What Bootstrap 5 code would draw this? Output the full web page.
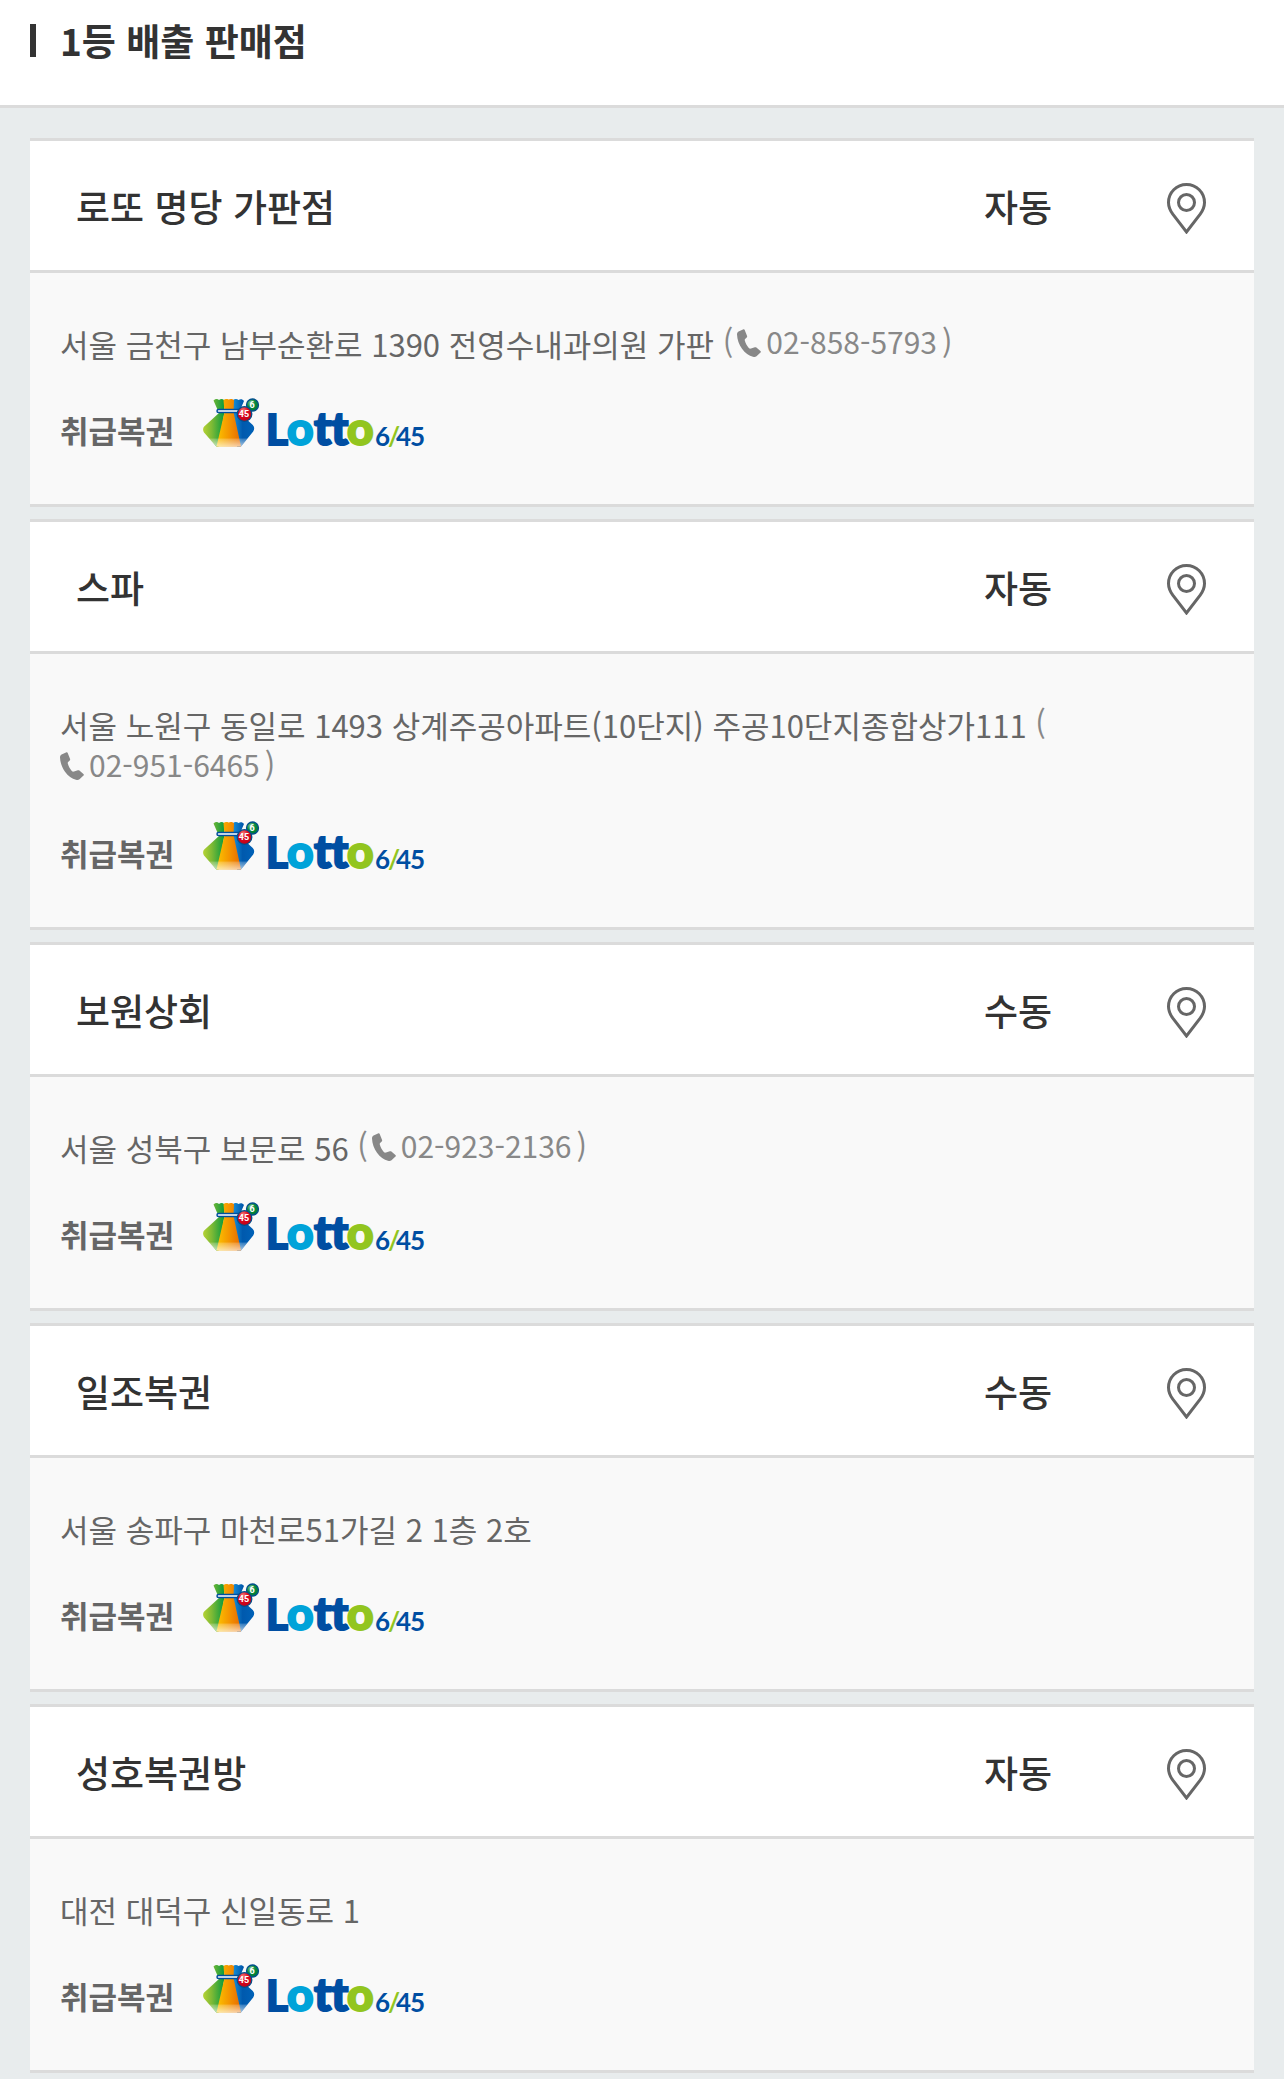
<!DOCTYPE html>
<html lang="ko">
<head>
<meta charset="utf-8">
<meta name="viewport" content="width=device-width, initial-scale=1">
<title>1등 배출 판매점</title>
<link rel="stylesheet" href="https://cdn.jsdelivr.net/npm/bootstrap@5.3.0/dist/css/bootstrap.min.css">
<style>
body{background:#e8eced;color:#333;font-family:"Noto Sans CJK KR",sans-serif;font-size:31px;line-height:42px}
.page-head{border-bottom:3px solid #dbdbdb;padding:16px 30px 41px;gap:24px}
.page-head::before{content:"";width:6px;height:33px;background:#333}
.page-head h1,.shop-head{font-size:37px;line-height:48px}
.shop-list{padding:30px 30px 6px;gap:12px}
.shop{border:solid #dbdbdb;border-width:3px 0;background:#f9f9f9}
.shop-head{border-bottom:3px solid #dbdbdb;padding:37px 48px 36px 46px}
.shop-head h2{font-size:inherit;line-height:inherit;font-weight:500}
.shop-kind{font-weight:500;margin-right:115px}
.pin{width:39px;height:56px}
.shop-body{padding:50px 30px 57px;color:#666}
.tel{color:#888;line-height:36px;vertical-align:3px}
.tel-open{margin-right:4px}
.tel a{color:inherit;white-space:nowrap;margin-right:5px;font-size:30px}
.tel-icon{width:24px;height:28px;vertical-align:-3px;margin-right:5px}
.goods{margin-top:33px;gap:29px;line-height:34px}
.goods-logo{width:222px;height:49px;overflow:visible}
.goods-logo text{font-family:Lato,sans-serif;font-weight:900;font-size:46px;fill:#004ea2;stroke:#004ea2;stroke-width:2px}
.goods-logo .logo-l{font-size:42px}
.goods-logo .logo-sky{fill:#00a3d9;stroke:#00a3d9}
.goods-logo .logo-lime{fill:#92c51f;stroke:#92c51f}
.goods-logo .logo-num{font-weight:700;font-size:26px;stroke:none}
.goods-logo .logo-ball{font-family:Roboto,sans-serif;font-weight:700;font-size:9px;fill:#fff;stroke:none;text-anchor:middle}
</style>
<script src="https://cdn.jsdelivr.net/npm/bootstrap@5.3.0/dist/js/bootstrap.bundle.min.js"></script>
</head>
<body>
<svg width="0" height="0" class="position-absolute" aria-hidden="true">
  <defs>
    <linearGradient id="gGreen" x1="0" y1="0" x2="1" y2="0"><stop offset="0" stop-color="#b5d234"/><stop offset=".4" stop-color="#7fba35"/><stop offset="1" stop-color="#079a3e"/></linearGradient>
    <linearGradient id="gOrange" x1="0" y1="0" x2="1" y2="0"><stop offset="0" stop-color="#fcc400"/><stop offset=".55" stop-color="#f39200"/><stop offset="1" stop-color="#e66a00"/></linearGradient>
    <linearGradient id="gBlue" x1="0" y1="0" x2="1" y2="0"><stop offset="0" stop-color="#1c9ae0"/><stop offset=".5" stop-color="#0059ad"/><stop offset="1" stop-color="#0062b8"/></linearGradient>
    <linearGradient id="gFade" x1="0" y1="0" x2="0" y2="1"><stop offset="0" stop-color="#fff" stop-opacity=".2"/><stop offset="1" stop-color="#fff" stop-opacity=".65"/></linearGradient>
    <radialGradient id="gRed" cx=".4" cy=".25" r=".75"><stop offset="0" stop-color="#f47c78"/><stop offset=".45" stop-color="#dc0a1e"/><stop offset="1" stop-color="#c00018"/></radialGradient>
    <radialGradient id="gBall" cx=".35" cy=".3" r=".75"><stop offset="0" stop-color="#7cc48c"/><stop offset=".5" stop-color="#078a3c"/><stop offset="1" stop-color="#007a35"/></radialGradient>
  </defs>
  <symbol id="pin" viewBox="0 -5 39 56">
    <path d="M19.500 1.500C9.500 1.500 1.500 9.500 1.500 19.500c0 4.500 1.800 8.200 4.300 11.700L19.500 49l13.700-17.800c2.500-3.500 4.300-7.200 4.300-11.700 0-10-8-18-18-18z" fill="none" stroke="#666" stroke-width="3"/>
    <circle cx="19.500" cy="19.500" r="8" fill="none" stroke="#666" stroke-width="3"/>
  </symbol>
  <symbol id="phone" viewBox="0 0 24 28">
    <path d="M6.500.2 1.600 2.400C.5 3 0 4 0 5.500c.2 5 2 10 5 14.200 3 4.200 7 7 11 8.100 1.500.4 2.600.2 3.500-.6l4-3.600c.6-.5.5-1.200-.1-1.700l-4-3.400c-.5-.4-1-.4-1.600-.2L14 19.600c-1 .3-1.600 0-2.200-.7-1.800-2-3.300-4.600-4-7.300-.2-.8 0-1.400.6-1.900l1.300-1.200c.5-.5.6-1 .3-1.700L7.600.8C7.400.2 7 0 6.500.2z" fill="#888"/>
  </symbol>
  <symbol id="bag" viewBox="0 0 222 49">
    <path d="M10.500 2.500C12.500.7 14.500.8 16 2c1.700-1.300 3.500-1.200 5 0l.5 12-6 34.500h-2.200L1 34.500C-.3 32.500-.2 30 1.200 28.500L16 15z" fill="url(#gGreen)"/>
    <path d="M30 2c2-1.400 4-1.200 5.500 0 2-1.300 4.200-.8 5.500 1l-5 11.500L49.800 27c1.700 1.800 1.900 4.300.4 6.500L38 48.500h-4L28 16z" fill="url(#gBlue)"/>
    <path d="M20.500 2.200c2-1.500 3.300-1.200 5-.8 2-.8 4-.7 5.500.8L30.500 14 38 48.500H13.500L21.500 14z" fill="url(#gOrange)"/>
    <path d="M6 40.500h38.500L38 48.500H13.500z" fill="url(#gFade)"/>
    <rect x="14" y="11.500" width="23" height="3" rx="1.500" fill="#fff" stroke="#004f9e" stroke-width="1.500"/>
    <circle cx="49.500" cy="7" r="6" fill="url(#gBall)" stroke="#00508c" stroke-width="1.300"/>
    <circle cx="41.500" cy="16" r="7.300" fill="url(#gRed)" stroke="#00508c" stroke-width="1.300"/>
  </symbol>
</svg>

<header class="page-head bg-white d-flex align-items-center">
  <h1 class="fw-bold m-0">1등 배출 판매점</h1>
</header>

<main class="shop-list d-flex flex-column">
  <article class="shop">
    <div class="shop-head bg-white d-flex align-items-center">
      <h2 class="flex-grow-1 m-0">로또 명당 가판점</h2><span class="shop-kind">자동</span>
      <a href="#map1" class="d-flex" aria-label="지도"><svg class="pin"><use href="#pin"/></svg></a>
    </div>
    <div class="shop-body">
      <p class="m-0">서울 금천구 남부순환로 1390 전영수내과의원 가판 <span class="tel"><span class="tel-open">(</span><wbr><a href="tel:028585793" class="text-decoration-none"><svg class="tel-icon" aria-hidden="true"><use href="#phone"/></svg>02-858-5793</a>)</span></p>
      <div class="goods d-flex align-items-end"><strong>취급복권</strong>
        <svg class="goods-logo" viewBox="0 0 222 49" role="img" aria-label="Lotto 6/45"><use href="#bag"/><text class="logo-ball" x="49" y="10">6</text><text class="logo-ball" x="41" y="19">45</text><text class="logo-l" x="63" y="47">L</text><text class="logo-sky" x="84" y="47">o</text><text x="111 128" y="47">tt</text><text class="logo-lime" x="144" y="47">o</text><text class="logo-num" x="172" y="48">6</text><text class="logo-num logo-lime" x="185" y="48">/</text><text class="logo-num" x="193 207" y="48">45</text></svg>
      </div>
    </div>
  </article>

  <article class="shop">
    <div class="shop-head bg-white d-flex align-items-center">
      <h2 class="flex-grow-1 m-0">스파</h2><span class="shop-kind">자동</span>
      <a href="#map2" class="d-flex" aria-label="지도"><svg class="pin"><use href="#pin"/></svg></a>
    </div>
    <div class="shop-body">
      <p class="m-0">서울 노원구 동일로 1493 상계주공아파트(10단지) 주공10단지종합상가111 <span class="tel"><span class="tel-open">(</span><wbr><a href="tel:029516465" class="text-decoration-none"><svg class="tel-icon" aria-hidden="true"><use href="#phone"/></svg>02-951-6465</a>)</span></p>
      <div class="goods d-flex align-items-end"><strong>취급복권</strong>
        <svg class="goods-logo" viewBox="0 0 222 49" role="img" aria-label="Lotto 6/45"><use href="#bag"/><text class="logo-ball" x="49" y="10">6</text><text class="logo-ball" x="41" y="19">45</text><text class="logo-l" x="63" y="47">L</text><text class="logo-sky" x="84" y="47">o</text><text x="111 128" y="47">tt</text><text class="logo-lime" x="144" y="47">o</text><text class="logo-num" x="172" y="48">6</text><text class="logo-num logo-lime" x="185" y="48">/</text><text class="logo-num" x="193 207" y="48">45</text></svg>
      </div>
    </div>
  </article>

  <article class="shop">
    <div class="shop-head bg-white d-flex align-items-center">
      <h2 class="flex-grow-1 m-0">보원상회</h2><span class="shop-kind">수동</span>
      <a href="#map3" class="d-flex" aria-label="지도"><svg class="pin"><use href="#pin"/></svg></a>
    </div>
    <div class="shop-body">
      <p class="m-0">서울 성북구 보문로 56 <span class="tel"><span class="tel-open">(</span><wbr><a href="tel:029232136" class="text-decoration-none"><svg class="tel-icon" aria-hidden="true"><use href="#phone"/></svg>02-923-2136</a>)</span></p>
      <div class="goods d-flex align-items-end"><strong>취급복권</strong>
        <svg class="goods-logo" viewBox="0 0 222 49" role="img" aria-label="Lotto 6/45"><use href="#bag"/><text class="logo-ball" x="49" y="10">6</text><text class="logo-ball" x="41" y="19">45</text><text class="logo-l" x="63" y="47">L</text><text class="logo-sky" x="84" y="47">o</text><text x="111 128" y="47">tt</text><text class="logo-lime" x="144" y="47">o</text><text class="logo-num" x="172" y="48">6</text><text class="logo-num logo-lime" x="185" y="48">/</text><text class="logo-num" x="193 207" y="48">45</text></svg>
      </div>
    </div>
  </article>

  <article class="shop">
    <div class="shop-head bg-white d-flex align-items-center">
      <h2 class="flex-grow-1 m-0">일조복권</h2><span class="shop-kind">수동</span>
      <a href="#map4" class="d-flex" aria-label="지도"><svg class="pin"><use href="#pin"/></svg></a>
    </div>
    <div class="shop-body">
      <p class="m-0">서울 송파구 마천로51가길 2 1층 2호</p>
      <div class="goods d-flex align-items-end"><strong>취급복권</strong>
        <svg class="goods-logo" viewBox="0 0 222 49" role="img" aria-label="Lotto 6/45"><use href="#bag"/><text class="logo-ball" x="49" y="10">6</text><text class="logo-ball" x="41" y="19">45</text><text class="logo-l" x="63" y="47">L</text><text class="logo-sky" x="84" y="47">o</text><text x="111 128" y="47">tt</text><text class="logo-lime" x="144" y="47">o</text><text class="logo-num" x="172" y="48">6</text><text class="logo-num logo-lime" x="185" y="48">/</text><text class="logo-num" x="193 207" y="48">45</text></svg>
      </div>
    </div>
  </article>

  <article class="shop">
    <div class="shop-head bg-white d-flex align-items-center">
      <h2 class="flex-grow-1 m-0">성호복권방</h2><span class="shop-kind">자동</span>
      <a href="#map5" class="d-flex" aria-label="지도"><svg class="pin"><use href="#pin"/></svg></a>
    </div>
    <div class="shop-body">
      <p class="m-0">대전 대덕구 신일동로 1</p>
      <div class="goods d-flex align-items-end"><strong>취급복권</strong>
        <svg class="goods-logo" viewBox="0 0 222 49" role="img" aria-label="Lotto 6/45"><use href="#bag"/><text class="logo-ball" x="49" y="10">6</text><text class="logo-ball" x="41" y="19">45</text><text class="logo-l" x="63" y="47">L</text><text class="logo-sky" x="84" y="47">o</text><text x="111 128" y="47">tt</text><text class="logo-lime" x="144" y="47">o</text><text class="logo-num" x="172" y="48">6</text><text class="logo-num logo-lime" x="185" y="48">/</text><text class="logo-num" x="193 207" y="48">45</text></svg>
      </div>
    </div>
  </article>
</main>
</body>
</html>
